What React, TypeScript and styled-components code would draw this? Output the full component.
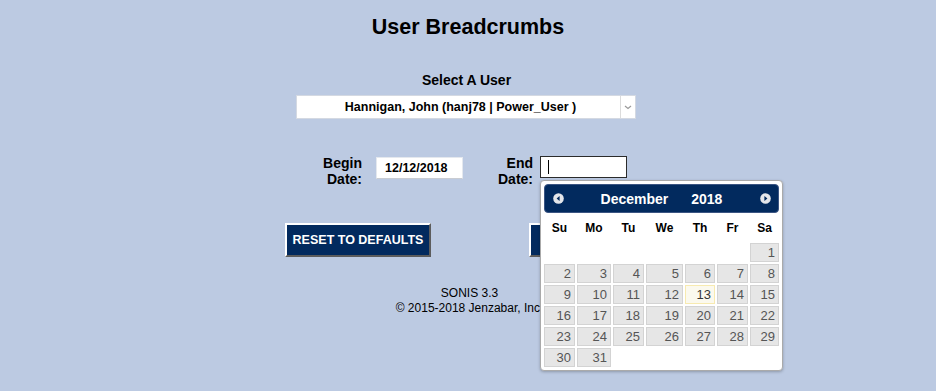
import React from "react";
import styled, { createGlobalStyle } from "styled-components";

const NAVY = "#022a5e";

const GlobalStyle = createGlobalStyle`
  html, body {
    margin: 0;
    padding: 0;
    background: #bccae2;
  }
  body {
    font-family: "Liberation Sans", Arial, sans-serif;
    color: #000;
  }
`;

const Page = styled.div`
  width: 936px;
  height: 391px;
  padding-top: 14px;
  box-sizing: border-box;
  display: flex;
  flex-direction: column;
  align-items: center;
  overflow: hidden;
`;

const Title = styled.h1`
  margin: 0;
  font-size: 21.5px;
  line-height: 26px;
  font-weight: bold;
`;

const FieldLabel = styled.div`
  margin-top: 32px;
  font-size: 14px;
  line-height: 16px;
  font-weight: bold;
  padding-right: 3px;
`;

const SelectRow = styled.div`
  margin-top: 7px;
  padding-right: 4px;
`;

const SelectBox = styled.div`
  width: 340px;
  height: 24px;
  box-sizing: border-box;
  background: #fff;
  border: 1px solid #d4d9e2;
  display: flex;
  align-items: stretch;
`;

const SelectValue = styled.div`
  flex: 1;
  display: flex;
  align-items: center;
  justify-content: center;
  font-size: 12.5px;
  font-weight: bold;
  padding-left: 4px;
`;

const SelectArrow = styled.div`
  width: 14px;
  border-left: 1px solid #dcdcdc;
  display: flex;
  align-items: center;
  justify-content: center;
`;

const DateRow = styled.div`
  margin-top: 36px;
  display: flex;
  align-items: flex-start;
  padding-right: 7px;
`;

const DateLabel = styled.div<{ $width: number }>`
  width: ${(p) => p.$width}px;
  text-align: right;
  font-size: 14px;
  line-height: 16px;
  font-weight: bold;
`;

const InputWrap = styled.div<{ $gap: number; $top: number }>`
  position: relative;
  margin-left: ${(p) => p.$gap}px;
  margin-top: ${(p) => p.$top}px;
`;

const TextInput = styled.div<{ $active?: boolean }>`
  width: 87px;
  height: 22px;
  box-sizing: border-box;
  background: #fff;
  border: 1px solid ${(p) => (p.$active ? "#2b2b2b" : "#e4e8ee")};
  border-bottom-color: ${(p) => (p.$active ? "#2b2b2b" : "#c9ccd2")};
  display: flex;
  align-items: center;
  padding-left: ${(p) => (p.$active ? 7 : 8)}px;
  font-size: 12.5px;
  font-weight: bold;
`;

const Caret = styled.span`
  width: 1px;
  height: 14px;
  background: #000;
`;

const ButtonRow = styled.div`
  margin-top: 36px;
  display: flex;
  gap: 98px;
`;

const ActionButton = styled.button<{ $width: number }>`
  width: ${(p) => p.$width}px;
  height: 34px;
  box-sizing: border-box;
  background: ${NAVY};
  color: #fff;
  font-family: "Liberation Sans", Arial, sans-serif;
  font-size: 12.5px;
  font-weight: bold;
  border: 2px solid;
  border-color: #fff #5c5c5c #5c5c5c #fff;
  padding: 0;
  cursor: pointer;
`;

const Footer = styled.div`
  margin-top: 29px;
  text-align: center;
  font-size: 12px;
  line-height: 15px;
  padding-left: 3px;
`;

/* ---------- datepicker popup ---------- */

const COLS = "31px 34px 31px 37px 30px 31px 29px";

const Picker = styled.div`
  position: absolute;
  top: 24px;
  left: 0;
  z-index: 10;
  width: 243px;
  box-sizing: border-box;
  padding: 3px 3px 3px 3px;
  background: #fff;
  border: 1px solid #aaa;
  border-radius: 4px;
  box-shadow: 0 1px 3px rgba(0, 0, 0, 0.25);
`;

const PickerHeader = styled.div`
  height: 29px;
  box-sizing: border-box;
  background: ${NAVY};
  border: 1px solid #3b5583;
  border-radius: 4px;
  display: flex;
  align-items: center;
  color: #fff;
  font-size: 14px;
  font-weight: bold;
`;

const NavButton = styled.div`
  width: 26px;
  display: flex;
  align-items: center;
  justify-content: center;
`;

const MonthTitle = styled.div`
  flex: 1;
  display: flex;
  justify-content: center;
  gap: 23px;
`;

const DayNames = styled.div`
  display: grid;
  grid-template-columns: ${COLS};
  column-gap: 2px;
  height: 30px;
  align-items: center;
  font-size: 12px;
  font-weight: bold;
  text-align: center;
  color: #000;
`;

const DayGrid = styled.div`
  display: grid;
  grid-template-columns: ${COLS};
  grid-auto-rows: 19px;
  gap: 2px;
`;

const DayCell = styled.div<{ $today?: boolean }>`
  box-sizing: border-box;
  border: 1px solid ${(p) => (p.$today ? "#f7eab0" : "#d3d3d3")};
  background: ${(p) => (p.$today ? "#fbf9ee" : "#e6e6e6")};
  color: ${(p) => (p.$today ? "#363636" : "#555")};
  font-size: 13px;
  line-height: 17px;
  text-align: right;
  padding-right: 3px;
`;

const Blank = styled.div``;

const NavIcon = ({ dir }: { dir: "prev" | "next" }) => (
  <svg width="11" height="11" viewBox="0 0 11 11">
    <circle cx="5.5" cy="5.5" r="5.3" fill="#e4e6ea" />
    {dir === "prev" ? (
      <polygon points="6.6,3 6.6,8 3.6,5.5" fill={NAVY} />
    ) : (
      <polygon points="4.4,3 4.4,8 7.4,5.5" fill={NAVY} />
    )}
  </svg>
);

const DatePicker = () => {
  const days: (number | null)[] = [null, null, null, null, null, null];
  for (let d = 1; d <= 31; d++) days.push(d);

  return (
    <Picker>
      <PickerHeader>
        <NavButton>
          <NavIcon dir="prev" />
        </NavButton>
        <MonthTitle>
          <span>December</span>
          <span>2018</span>
        </MonthTitle>
        <NavButton>
          <NavIcon dir="next" />
        </NavButton>
      </PickerHeader>
      <DayNames>
        {["Su", "Mo", "Tu", "We", "Th", "Fr", "Sa"].map((n) => (
          <div key={n}>{n}</div>
        ))}
      </DayNames>
      <DayGrid>
        {days.map((d, i) =>
          d === null ? (
            <Blank key={"b" + i} />
          ) : (
            <DayCell key={d} $today={d === 13}>
              {d}
            </DayCell>
          )
        )}
      </DayGrid>
    </Picker>
  );
};

export default function App() {
  return (
    <>
      <GlobalStyle />
      <Page>
        <Title>User Breadcrumbs</Title>

        <FieldLabel>Select A User</FieldLabel>
        <SelectRow>
          <SelectBox>
            <SelectValue>Hannigan, John (hanj78 | Power_User )</SelectValue>
            <SelectArrow>
              <svg width="8" height="5" viewBox="0 0 8 5">
                <polyline
                  points="1,1 4,3.5 7,1"
                  fill="none"
                  stroke="#9a9a9a"
                  strokeWidth="1.2"
                />
              </svg>
            </SelectArrow>
          </SelectBox>
        </SelectRow>

        <DateRow>
          <DateLabel $width={60}>
            Begin
            <br />
            Date:
          </DateLabel>
          <InputWrap $gap={14} $top={2}>
            <TextInput>12/12/2018</TextInput>
          </InputWrap>
          <DateLabel $width={70}>
            End
            <br />
            Date:
          </DateLabel>
          <InputWrap $gap={7} $top={1}>
            <TextInput $active>
              <Caret />
            </TextInput>
            <DatePicker />
          </InputWrap>
        </DateRow>

        <ButtonRow>
          <ActionButton $width={146}>RESET TO DEFAULTS</ActionButton>
          <ActionButton $width={122}>SEARCH</ActionButton>
        </ButtonRow>

        <Footer>
          SONIS 3.3
          <br />© 2015-2018 Jenzabar, Inc.
        </Footer>
      </Page>
    </>
  );
}
